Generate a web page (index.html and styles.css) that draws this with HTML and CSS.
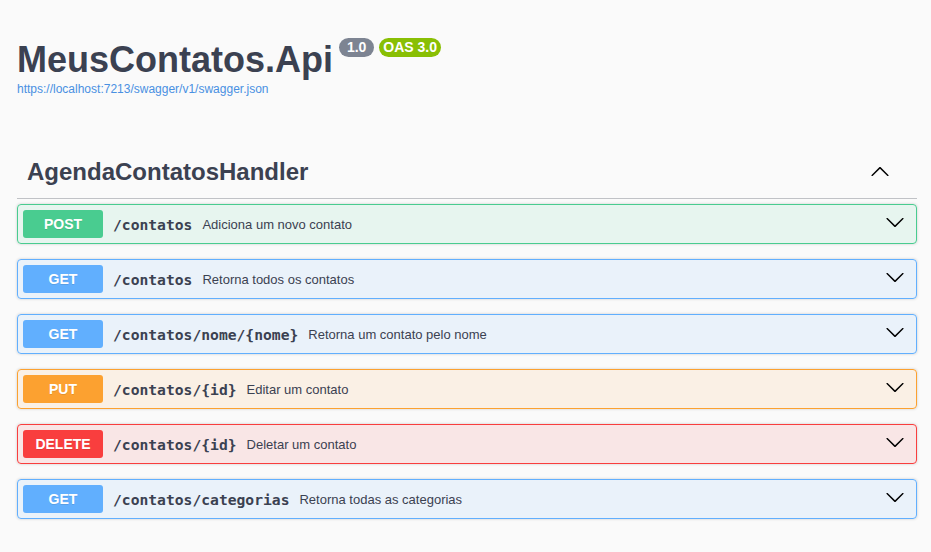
FILE: index.html
```
<!DOCTYPE html>
<html lang="pt">
<head>
<meta charset="utf-8">
<title>MeusContatos.Api</title>
<link rel="stylesheet" href="styles.css">
</head>
<body>
<div class="wrapper">
  <div class="info">
    <h2 class="title"><span class="title-text">MeusContatos.Api</span><span class="badge version"> 1.0 </span><span class="badge oas">OAS 3.0</span></h2>
    <a class="url" href="#">https://localhost:7213/swagger/v1/swagger.json</a>
  </div>

  <section class="tag-section">
    <h3 class="opblock-tag">
      <span class="tag-name">AgendaContatosHandler</span>
      <svg class="arrow up" width="20" height="20" viewBox="0 0 20 20"><path d="M17.418 14.908c.272.268.709.268.979 0s.271-.701 0-.969l-7.908-7.83c-.27-.268-.707-.268-.979 0l-7.908 7.83c-.27.268-.27.701 0 .969.271.268.709.268.979 0L10 7.767l7.418 7.141z"/></svg>
    </h3>

    <div class="opblock post">
      <span class="method">POST</span>
      <span class="path">/contatos</span>
      <span class="desc">Adiciona um novo contato</span>
      <svg class="arrow" width="20" height="20" viewBox="0 0 20 20"><path d="M17.418 6.109c.272-.268.709-.268.979 0s.271.701 0 .969l-7.908 7.83c-.27.268-.707.268-.979 0l-7.908-7.83c-.27-.268-.27-.701 0-.969.271-.268.709-.268.979 0L10 13.25l7.418-7.141z"/></svg>
    </div>

    <div class="opblock get">
      <span class="method">GET</span>
      <span class="path">/contatos</span>
      <span class="desc">Retorna todos os contatos</span>
      <svg class="arrow" width="20" height="20" viewBox="0 0 20 20"><path d="M17.418 6.109c.272-.268.709-.268.979 0s.271.701 0 .969l-7.908 7.83c-.27.268-.707.268-.979 0l-7.908-7.83c-.27-.268-.27-.701 0-.969.271-.268.709-.268.979 0L10 13.25l7.418-7.141z"/></svg>
    </div>

    <div class="opblock get">
      <span class="method">GET</span>
      <span class="path">/contatos/nome/{nome}</span>
      <span class="desc">Retorna um contato pelo nome</span>
      <svg class="arrow" width="20" height="20" viewBox="0 0 20 20"><path d="M17.418 6.109c.272-.268.709-.268.979 0s.271.701 0 .969l-7.908 7.83c-.27.268-.707.268-.979 0l-7.908-7.83c-.27-.268-.27-.701 0-.969.271-.268.709-.268.979 0L10 13.25l7.418-7.141z"/></svg>
    </div>

    <div class="opblock put">
      <span class="method">PUT</span>
      <span class="path">/contatos/{id}</span>
      <span class="desc">Editar um contato</span>
      <svg class="arrow" width="20" height="20" viewBox="0 0 20 20"><path d="M17.418 6.109c.272-.268.709-.268.979 0s.271.701 0 .969l-7.908 7.83c-.27.268-.707.268-.979 0l-7.908-7.83c-.27-.268-.27-.701 0-.969.271-.268.709-.268.979 0L10 13.25l7.418-7.141z"/></svg>
    </div>

    <div class="opblock delete">
      <span class="method">DELETE</span>
      <span class="path">/contatos/{id}</span>
      <span class="desc">Deletar um contato</span>
      <svg class="arrow" width="20" height="20" viewBox="0 0 20 20"><path d="M17.418 6.109c.272-.268.709-.268.979 0s.271.701 0 .969l-7.908 7.83c-.27.268-.707.268-.979 0l-7.908-7.83c-.27-.268-.27-.701 0-.969.271-.268.709-.268.979 0L10 13.25l7.418-7.141z"/></svg>
    </div>

    <div class="opblock get">
      <span class="method">GET</span>
      <span class="path">/contatos/categorias</span>
      <span class="desc">Retorna todas as categorias</span>
      <svg class="arrow" width="20" height="20" viewBox="0 0 20 20"><path d="M17.418 6.109c.272-.268.709-.268.979 0s.271.701 0 .969l-7.908 7.83c-.27.268-.707.268-.979 0l-7.908-7.83c-.27-.268-.27-.701 0-.969.271-.268.709-.268.979 0L10 13.25l7.418-7.141z"/></svg>
    </div>
  </section>
</div>
</body>
</html>
```
FILE: styles.css
```
html, body {
  margin: 0;
  padding: 0;
  background: #fafafa;
}

body {
  font-family: "Liberation Sans", Arial, sans-serif;
  color: #3b4151;
}

.wrapper {
  padding: 0 14px 0 17px;
}

.info {
  padding-top: 39px;
}

.title {
  display: flex;
  align-items: flex-start;
  margin: 0;
  font-size: 36px;
  line-height: 41px;
  font-weight: bold;
  color: #3b4151;
}

.badge {
  display: inline-block;
  margin-top: -1px;
  padding: 2px 4px 3px;
  border-radius: 57px;
  color: #fff;
  font-size: 14px;
  line-height: 14px;
  font-weight: bold;
  white-space: pre;
}

.version {
  margin-left: 6px;
  background: #7d8492;
}

.oas {
  margin-left: 5px;
  background: #89bf04;
}

.url {
  display: block;
  margin-top: 2px;
  font-size: 12px;
  line-height: 14px;
  color: #4990e2;
  text-decoration: none;
}

.tag-section {
  margin-top: 54px;
}

.opblock-tag {
  display: flex;
  align-items: center;
  margin: 0 0 5px;
  padding: 8px 20px 12px 10px;
  height: 28px;
  border-bottom: 1px solid rgba(59, 65, 81, 0.3);
  font-size: 24px;
  line-height: 28px;
  font-weight: bold;
  color: #3b4151;
}

.tag-name {
  flex: 1 1 auto;
}

.arrow {
  flex: none;
  fill: #000;
}

.arrow.up {
  margin: 0 7px 3px 0;
}

.opblock {
  display: flex;
  align-items: center;
  margin: 0 0 15px;
  padding: 5px;
  border: 1px solid;
  border-radius: 4px;
  box-shadow: 0 0 3px rgba(0, 0, 0, 0.19);
}

.opblock .arrow {
  margin: 0 6px 5px 0;
}

.method {
  flex: none;
  min-width: 80px;
  padding: 6px 0;
  border-radius: 3px;
  color: #fff;
  font-size: 14px;
  line-height: 16px;
  font-weight: bold;
  text-align: center;
  text-shadow: 0 1px 0 rgba(0, 0, 0, 0.1);
}

.path {
  padding: 0 10px;
  font-family: "DejaVu Sans Mono", "Liberation Mono", monospace;
  font-size: 14.67px;
  font-weight: bold;
  color: #3b4151;
}

.desc {
  flex: 1 1 auto;
  font-size: 13px;
  color: #3b4151;
}

.post { background: rgba(73, 204, 144, 0.1); border-color: #49cc90; }
.post .method { background: #49cc90; }

.get { background: rgba(97, 175, 254, 0.1); border-color: #61affe; }
.get .method { background: #61affe; }

.put { background: rgba(252, 161, 48, 0.1); border-color: #fca130; }
.put .method { background: #fca130; }

.delete { background: rgba(249, 62, 62, 0.1); border-color: #f93e3e; }
.delete .method { background: #f93e3e; }
```
